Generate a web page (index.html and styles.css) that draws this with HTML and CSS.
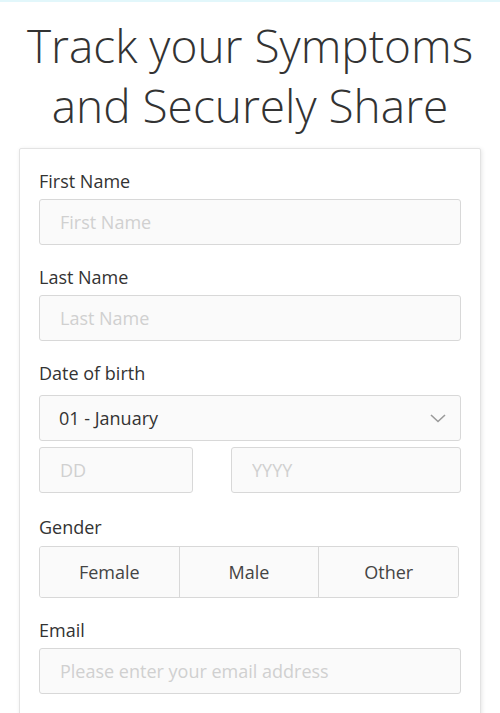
FILE: index.html
```html
<!DOCTYPE html>
<html lang="en">
<head>
<meta charset="utf-8">
<title>Track your Symptoms</title>
<link rel="stylesheet" href="styles.css">
</head>
<body>
<div class="topbar"></div>
<h1 class="title">Track your Symptoms<br>and Securely Share</h1>
<form class="card">
  <div class="field">
    <label class="label" for="fn">First Name</label>
    <input class="input" id="fn" type="text" placeholder="First Name">
  </div>
  <div class="field">
    <label class="label" for="ln">Last Name</label>
    <input class="input" id="ln" type="text" placeholder="Last Name">
  </div>
  <div class="field">
    <label class="label label-date" for="mm">Date of birth</label>
    <div class="select-wrap">
      <select class="input select" id="mm">
        <option>01 - January</option>
      </select>
      <svg class="chevron" width="16" height="9" viewBox="0 0 16 9"><path d="M1 1 L8 7.5 L15 1" fill="none" stroke="#9a9a9a" stroke-width="1.6"/></svg>
    </div>
    <div class="dob-row">
      <input class="input dd" type="text" placeholder="DD">
      <input class="input yyyy" type="text" placeholder="YYYY">
    </div>
  </div>
  <div class="field field-gender">
    <div class="label label-gender">Gender</div>
    <div class="btn-group">
      <button type="button" class="seg">Female</button>
      <button type="button" class="seg">Male</button>
      <button type="button" class="seg">Other</button>
    </div>
  </div>
  <div class="field">
    <label class="label" for="em">Email</label>
    <input class="input" id="em" type="email" placeholder="Please enter your email address">
  </div>
</form>
</body>
</html>
```
FILE: styles.css
```css
* { box-sizing: border-box; }
html, body { margin: 0; padding: 0; background: #fff; }
body {
  font-family: "Open Sans", "Noto Sans", sans-serif;
  color: #333;
}
.topbar {
  height: 2px;
  background: #e2f7fb;
}
.title {
  margin: 13px 0 13px;
  font-family: "Open Sans", sans-serif;
  font-weight: 300;
  font-size: 46px;
  line-height: 60px;
  text-align: center;
  color: #333;
}
.card {
  margin: 0 19px;
  border: 1px solid #e3e3e3;
  border-radius: 2px;
  box-shadow: 1px 1px 4px rgba(0,0,0,0.10);
  padding: 21px 19px 10px;
  background: #fff;
}
.field { margin-bottom: 21px; }
.field-gender { margin-top: 23px; }
.label {
  display: block;
  font-size: 18px;
  line-height: 22px;
  margin-bottom: 7px;
  color: #333;
}
.label-date { margin-bottom: 11px; }
.label-gender { margin-bottom: 8px; }
.input {
  display: block;
  width: 100%;
  min-width: 0;
  height: 46px;
  border: 1px solid #d8d8d8;
  border-radius: 3px;
  background: #fafafa;
  padding: 0 20px;
  font-family: inherit;
  font-size: 18px;
  color: #333;
  outline: none;
}
.input::placeholder { color: #d0d0d0; }
.select-wrap { position: relative; }
.select {
  -webkit-appearance: none;
  appearance: none;
  padding-left: 19px;
}
.chevron {
  position: absolute;
  right: 15px;
  top: 19px;
}
.dob-row {
  display: flex;
  margin-top: 6px;
  gap: 38px;
}
.dd { flex: 0 0 154px; width: 154px; }
.yyyy { flex: 1 1 0; width: 0; }
.btn-group {
  display: flex;
  width: 420px;
  height: 52px;
  border: 1px solid #d8d8d8;
  border-radius: 3px;
  background: #fafafa;
  overflow: hidden;
}
.seg {
  flex: 1 1 0;
  border: 0;
  border-left: 1px solid #d8d8d8;
  background: #fafafa;
  font-family: inherit;
  font-size: 18px;
  color: #444;
  padding: 0;
}
.seg:first-child { border-left: 0; }
```
